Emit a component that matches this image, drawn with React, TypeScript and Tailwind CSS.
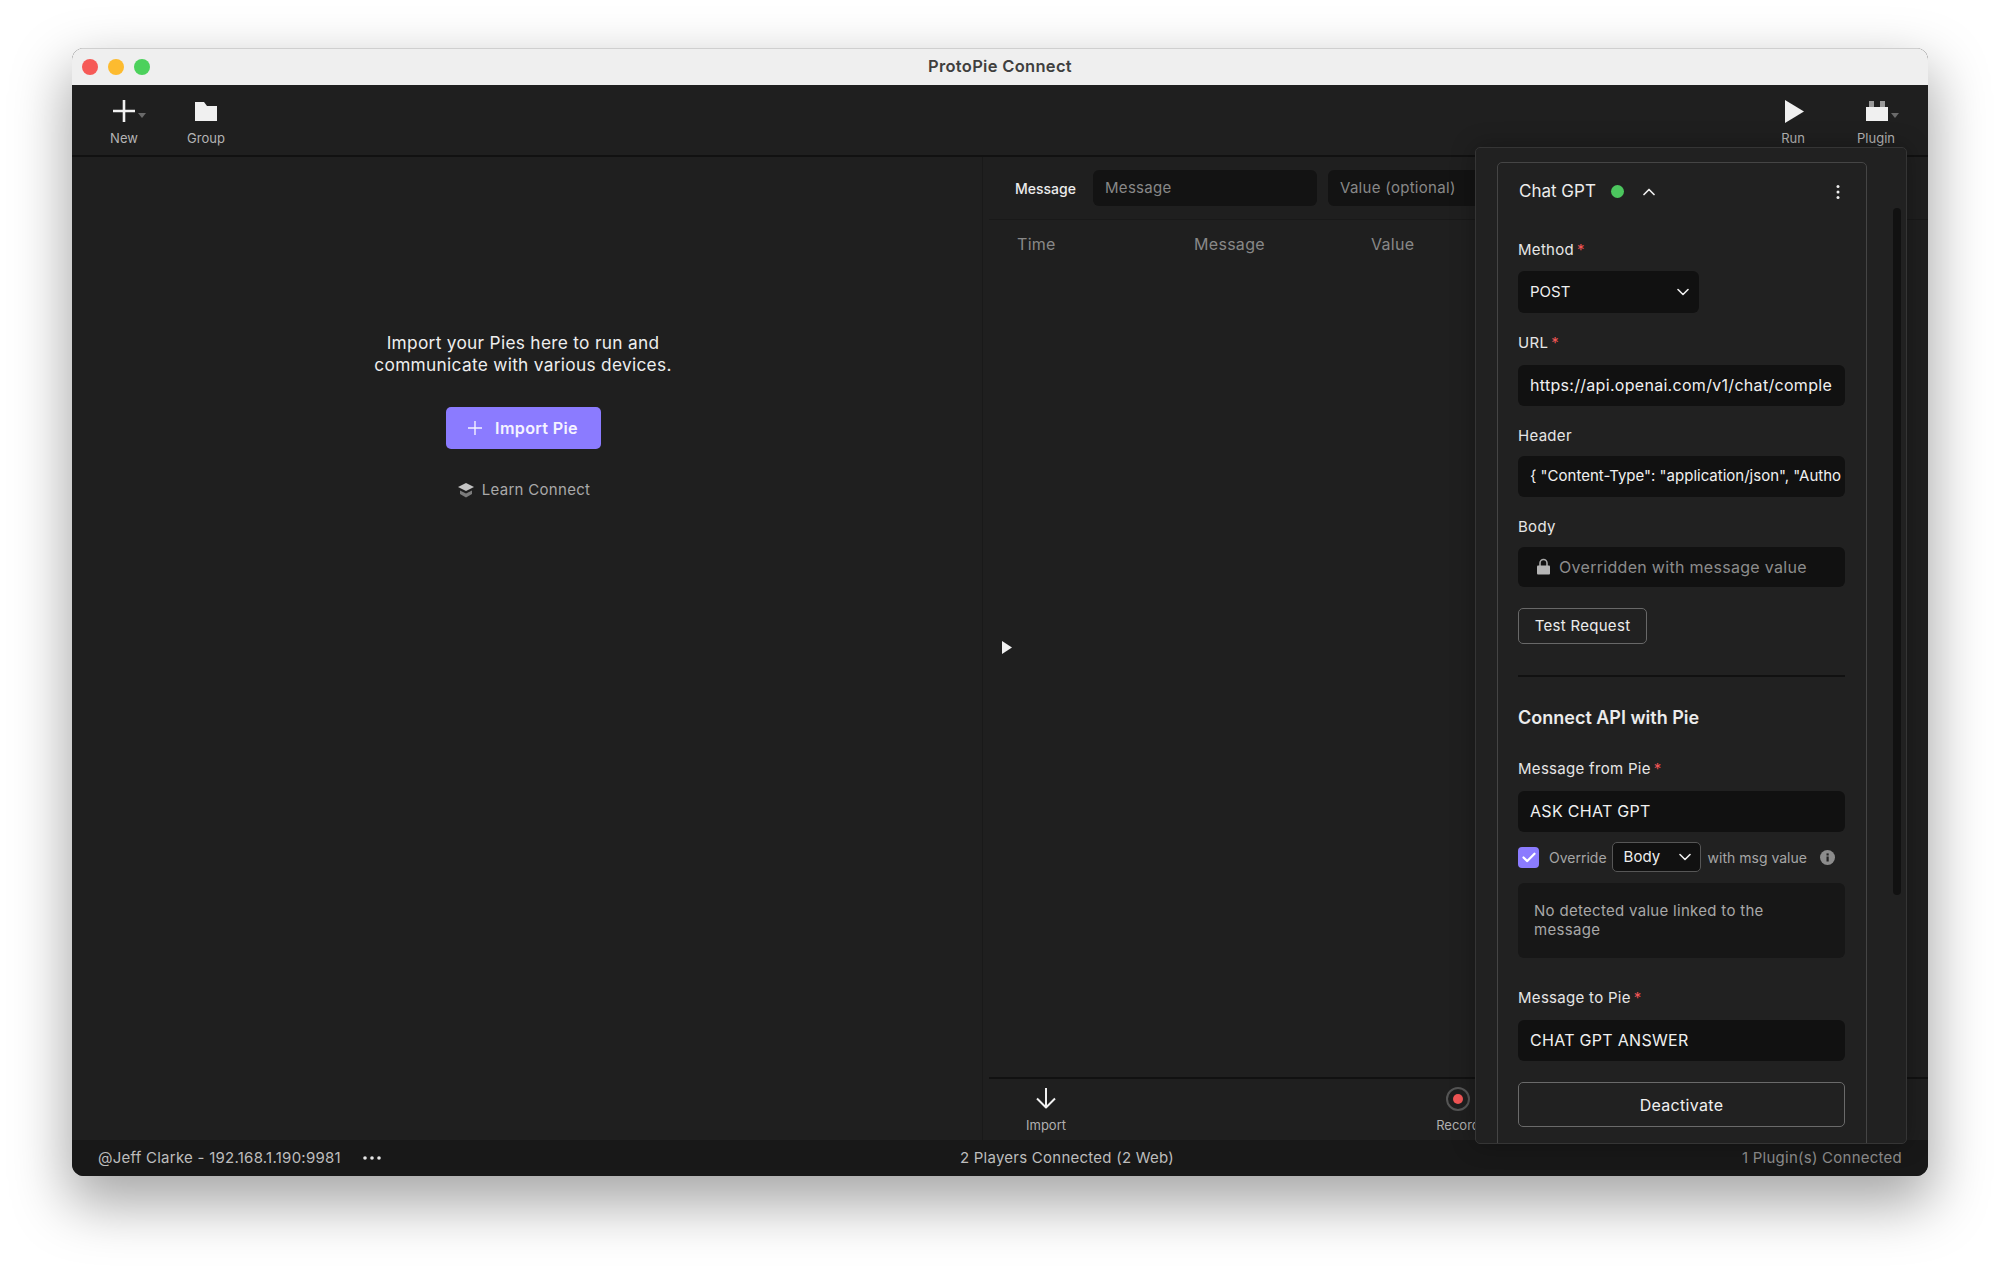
const Req = () => <span className="ml-[3px] text-[#f25555] text-[15px] leading-none relative -top-[1px]">*</span>;

const TinyCaret = () => (
  <svg width="8" height="5" viewBox="0 0 8 5" className="absolute">
    <path d="M0 0h8L4 5z" fill="#6a6a6a" />
  </svg>
);

const Chevron = ({ className = "" }: { className?: string }) => (
  <svg width="12" height="8" viewBox="0 0 12 8" className={className}>
    <path d="M1 1.5l5 5 5-5" fill="none" stroke="#eee" strokeWidth="1.6" strokeLinecap="round" strokeLinejoin="round" />
  </svg>
);

const Label = ({ text, req, className = "" }: { text: string; req?: boolean; className?: string }) => (
  <div className={`h-5 flex items-center text-[15px] text-[#e6e6e6] leading-5 ${className}`}>
    {text}
    {req && <Req />}
  </div>
);

const Field = ({ children, className = "" }: { children: React.ReactNode; className?: string }) => (
  <div className={`h-[41px] rounded-[6px] bg-[#111111] pl-3 pb-px flex items-center text-[16px] text-[#f0f0f0] whitespace-nowrap overflow-hidden ${className}`}>
    {children}
  </div>
);

const ToolItem = ({ icon, label, className = "" }: { icon: React.ReactNode; label: string; className?: string }) => (
  <div className={`flex flex-col items-center w-[60px] tracking-normal ${className}`}>
    <div className="h-[26px] flex items-center justify-center relative">{icon}</div>
    <div className="mt-[6px] text-[13px] leading-4 text-[#b4b4b4]">{label}</div>
  </div>
);

function ChatGptCard() {
  return (
    <div className="w-[370px] h-[1100px] rounded-t-[5px] border border-[#454545] pl-[20px] pr-[21px]">
      <div className="h-[57px] flex items-center">
        <span className="ml-px text-[17px] tracking-normal text-[#ececec]">Chat GPT</span>
        <span className="ml-[15px] w-[13px] h-[13px] rounded-full bg-[#4cc65e]" />
        <svg width="12" height="8" viewBox="0 0 12 8" className="ml-[19px]">
          <path d="M1 6.5l5-5 5 5" fill="none" stroke="#eee" strokeWidth="1.7" strokeLinecap="round" strokeLinejoin="round" />
        </svg>
        <svg width="4" height="16" viewBox="0 0 4 16" className="ml-auto mr-[5px]">
          <circle cx="2" cy="2.5" r="1.5" fill="#eee" />
          <circle cx="2" cy="8" r="1.5" fill="#eee" />
          <circle cx="2" cy="13.5" r="1.5" fill="#eee" />
        </svg>
      </div>

      <Label text="Method" req className="mt-[20px]" />
      <div className="mt-[11px] w-[181px] h-[42px] rounded-[6px] bg-[#111111] pl-3 pr-[10px] flex items-center justify-between text-[15px] tracking-normal text-[#f0f0f0]">
        POST
        <Chevron />
      </div>

      <Label text="URL" req className="mt-[20px]" />
      <Field className="mt-[12px]">https://api.openai.com/v1/chat/comple</Field>

      <Label text="Header" className="mt-[20px]" />
      <Field className="mt-[10px] !text-[15px] tracking-normal">{'{ "Content-Type": "application/json", "Autho'}</Field>

      <Label text="Body" className="mt-[20px]" />
      <Field className="mt-[10px] !h-[40px] !pl-[19px] text-[#8c8c8c]">
        <svg width="13" height="17" viewBox="0 0 13 17" className="mr-[9px]">
          <path d="M3 8V5a3.5 3.5 0 0 1 7 0v3" fill="none" stroke="#a8a8a8" strokeWidth="1.6" />
          <rect x="0" y="7.5" width="13" height="9" rx="1" fill="#b5b5b5" />
        </svg>
        <span className="text-[#8c8c8c]">Overridden with message value</span>
      </Field>

      <div className="mt-[21px] w-[129px] h-[36px] rounded-[5px] border border-[#686868] flex items-center justify-center text-[15px] text-[#ececec]">
        Test Request
      </div>

      <div className="mt-[31px] h-[2px] bg-[#111111]" />

      <div className="mt-[28px] h-6 flex items-center text-[18px] font-semibold tracking-normal text-[#ececec]">Connect API with Pie</div>

      <Label text="Message from Pie" req className="mt-[30px]" />
      <Field className="mt-[12px]">ASK CHAT GPT</Field>

      <div className="mt-[10px] h-[30px] flex items-center text-[14px] tracking-normal text-[#a6a6a6]">
        <span className="w-[21px] h-[21px] rounded-[4px] bg-[#8b7bff] flex items-center justify-center">
          <svg width="14" height="11" viewBox="0 0 14 11">
            <path d="M1.5 5.5l3.8 3.6L12.5 1.7" fill="none" stroke="#fff" strokeWidth="2.2" strokeLinecap="round" strokeLinejoin="round" />
          </svg>
        </span>
        <span className="ml-[10px]">Override</span>
        <span className="ml-[5px] w-[89px] h-[30px] rounded-[5px] border border-[#565656] bg-[#111111] pl-[11px] pr-[9px] flex items-center justify-between text-[15px] text-[#eeeeee]">
          Body
          <Chevron />
        </span>
        <span className="ml-[7px]">with msg value</span>
        <svg width="15" height="15" viewBox="0 0 15 15" className="ml-[13px]">
          <circle cx="7.5" cy="7.5" r="7.5" fill="#8c8c8c" />
          <rect x="6.5" y="6.5" width="2.2" height="5" fill="#222" />
          <rect x="6.5" y="3.4" width="2.2" height="2.1" fill="#222" />
        </svg>
      </div>

      <div className="mt-[11px] h-[75px] rounded-[6px] bg-[#171717] pl-4 pr-[41px] pt-[18px] text-[15px] leading-[19px] text-[#a8a8a8]">
        No detected value linked to the message
      </div>

      <Label text="Message to Pie" req className="mt-[30px]" />
      <Field className="mt-[12px]">CHAT GPT ANSWER</Field>

      <div className="mt-[21px] h-[45px] rounded-[5px] border border-[#6a6a6a] flex items-center justify-center text-[16px] text-[#f0f0f0]">
        Deactivate
      </div>
    </div>
  );
}

export default function App() {
  return (
    <div className="h-[1272px] bg-white pl-[72px] pr-[72px] pt-[48px] overflow-hidden font-['Inter',sans-serif] tracking-[0.3px]">
      <div className="relative h-[1128px] rounded-[12px] overflow-hidden flex flex-col bg-[#1f1f1f] shadow-[0_24px_56px_4px_rgba(0,0,0,0.35)]">
        {/* Title bar */}
        <div className="h-[37px] shrink-0 relative flex items-center justify-center bg-[#efefef] border-t border-[#cfcfcf] pb-[2px]">
          <div className="absolute left-[10px] top-[10px] flex gap-[10px]">
            <span className="w-4 h-4 rounded-full bg-[#f65a57]" />
            <span className="w-4 h-4 rounded-full bg-[#fdbb2f]" />
            <span className="w-4 h-4 rounded-full bg-[#4cd15c]" />
          </div>
          <span className="text-[16.5px] font-semibold text-[#3f3f3f]">ProtoPie Connect</span>
        </div>

        {/* Toolbar */}
        <div className="h-[72px] shrink-0 flex items-start pt-[13px] border-b-2 border-[#111111] pl-[22px] pr-[22px]">
          <ToolItem
            label="New"
            icon={
              <>
                <svg width="22" height="22" viewBox="0 0 22 22">
                  <path d="M11 0v22M0 11h22" stroke="#f2f2f2" strokeWidth="2.6" />
                </svg>
                <span className="absolute left-[25px] top-[15px]"><TinyCaret /></span>
              </>
            }
          />
          <ToolItem
            className="ml-[22px]"
            label="Group"
            icon={
              <svg width="22" height="19" viewBox="0 0 22 19">
                <path d="M0 0h9l3 4h10v15H0z" fill="#f0f0f0" />
              </svg>
            }
          />
          <ToolItem
            className="ml-auto"
            label="Run"
            icon={
              <svg width="19" height="23" viewBox="0 0 19 23" className="ml-[3px]">
                <path d="M0 0l19 11.5L0 23z" fill="#f0f0f0" />
              </svg>
            }
          />
          <ToolItem
            className="ml-[23px]"
            label="Plugin"
            icon={
              <>
                <svg width="22" height="20" viewBox="0 0 22 20" className="ml-[1px]">
                  <rect x="3" y="0" width="5" height="7" fill="#9a9a9a" />
                  <rect x="14" y="0" width="5" height="7" fill="#9a9a9a" />
                  <rect x="0" y="6" width="22" height="14" fill="#f0f0f0" />
                </svg>
                <span className="absolute left-[26px] top-[15px]"><TinyCaret /></span>
              </>
            }
          />
        </div>

        {/* Main */}
        <div className="flex-1 min-h-0 flex">
          <div className="w-[910px] shrink-0 flex flex-col items-center pt-[175px] pr-2 text-[#eeeeee]">
            <div className="text-[17.3px] leading-[22px] text-center">
              Import your Pies here to run and
              <br />
              communicate with various devices.
            </div>
            <div className="mt-[31px] w-[155px] h-[42px] rounded-[5px] bg-[#8b7bff] flex items-center justify-center text-[16.2px] font-semibold text-[#f5f3ff]">
              <svg width="14" height="14" viewBox="0 0 14 14" className="mr-[13px]">
                <path d="M7 0v14M0 7h14" stroke="#f5f3ff" strokeWidth="1.4" />
              </svg>
              Import Pie
            </div>
            <div className="mt-[31px] h-5 flex items-center text-[15px] text-[#a9a9a9] ml-[2px]">
              <svg width="16" height="16" viewBox="0 0 16 16" className="mr-[8px]">
                <path d="M8 1l8 4-8 4-8-4z" fill="#c4c4c4" />
                <path d="M2 8.5l6 3 6-3V12l-6 3.5L2 12z" fill="#7c7c7c" />
              </svg>
              Learn Connect
            </div>
          </div>

          <div className="flex-1 min-w-0 relative border-l border-[#191919] pl-[6px] flex flex-col">
            <div className="h-[63px] shrink-0 flex items-center border-b border-[#191919] pl-[26px]">
              <span className="w-[60px] text-[14px] tracking-normal text-[#ececec] font-medium">Message</span>
              <div className="ml-[18px] w-[224px] h-9 rounded-[6px] bg-[#131313] pl-3 flex items-center text-[15px] text-[#888888]">Message</div>
              <div className="ml-[11px] w-[200px] h-9 rounded-[6px] bg-[#131313] pl-3 flex items-center text-[15px] text-[#888888]">Value (optional)</div>
            </div>
            <div className="h-[48px] shrink-0 flex items-center text-[16px] text-[#888888]">
              <span className="ml-[28px] w-[177px]">Time</span>
              <span className="w-[177px]">Message</span>
              <span>Value</span>
            </div>
            <div className="flex-1 flex items-start">
              <svg width="10" height="13" viewBox="0 0 10 13" className="ml-[13px] mt-[373px]">
                <path d="M0 0l10 6.5L0 13z" fill="#f0f0f0" />
              </svg>
            </div>
            <div className="h-[63px] shrink-0 border-t-2 border-[#111111] flex items-start pt-[8px] text-[13px] tracking-normal text-[#b0b0b0]">
              <div className="ml-[27px] w-[60px] flex flex-col items-center">
                <svg width="22" height="22" viewBox="0 0 22 22">
                  <path d="M11 1v19M2 11.5l9 9 9-9" fill="none" stroke="#f0f0f0" strokeWidth="2" strokeLinejoin="round" />
                </svg>
                <span className="mt-[8px] leading-4">Import</span>
              </div>
              <div className="ml-[352px] flex flex-col items-center w-[60px]">
                <span className="w-6 h-6 rounded-full border-2 border-[#555555] flex items-center justify-center">
                  <span className="w-[10px] h-[10px] rounded-full bg-[#f25555]" />
                </span>
                <span className="mt-[6px] leading-4">Record</span>
              </div>
            </div>
          </div>
        </div>

        {/* Status bar */}
        <div className="h-[36px] shrink-0 relative flex items-center bg-[#181818] pl-[26px] pr-[26px] text-[15px] tracking-[0.25px] text-[#bdbdbd]">
          <span>@Jeff Clarke - 192.168.1.190:9981</span>
          <svg width="18" height="4" viewBox="0 0 18 4" className="ml-[22px]">
            <circle cx="2" cy="2" r="1.8" fill="#e6e6e6" />
            <circle cx="9" cy="2" r="1.8" fill="#e6e6e6" />
            <circle cx="16" cy="2" r="1.8" fill="#e6e6e6" />
          </svg>
          <span className="ml-[579px]">2 Players Connected (2 Web)</span>
          <span className="ml-auto text-[#8d8d8d]">1 Plugin(s) Connected</span>
        </div>

        {/* Floating plugin panel */}
        <div className="absolute left-[1403px] top-[99px] w-[432px] h-[997px] rounded-[5px] border border-[#353535] bg-[#212121] shadow-[0_0_24px_rgba(0,0,0,0.3)] overflow-hidden pl-[21px] pt-[14px]">
          <ChatGptCard />
          <div className="absolute left-[417px] top-[60px] w-2 h-[687px] rounded-full bg-[#111111]" />
        </div>
      </div>
    </div>
  );
}
